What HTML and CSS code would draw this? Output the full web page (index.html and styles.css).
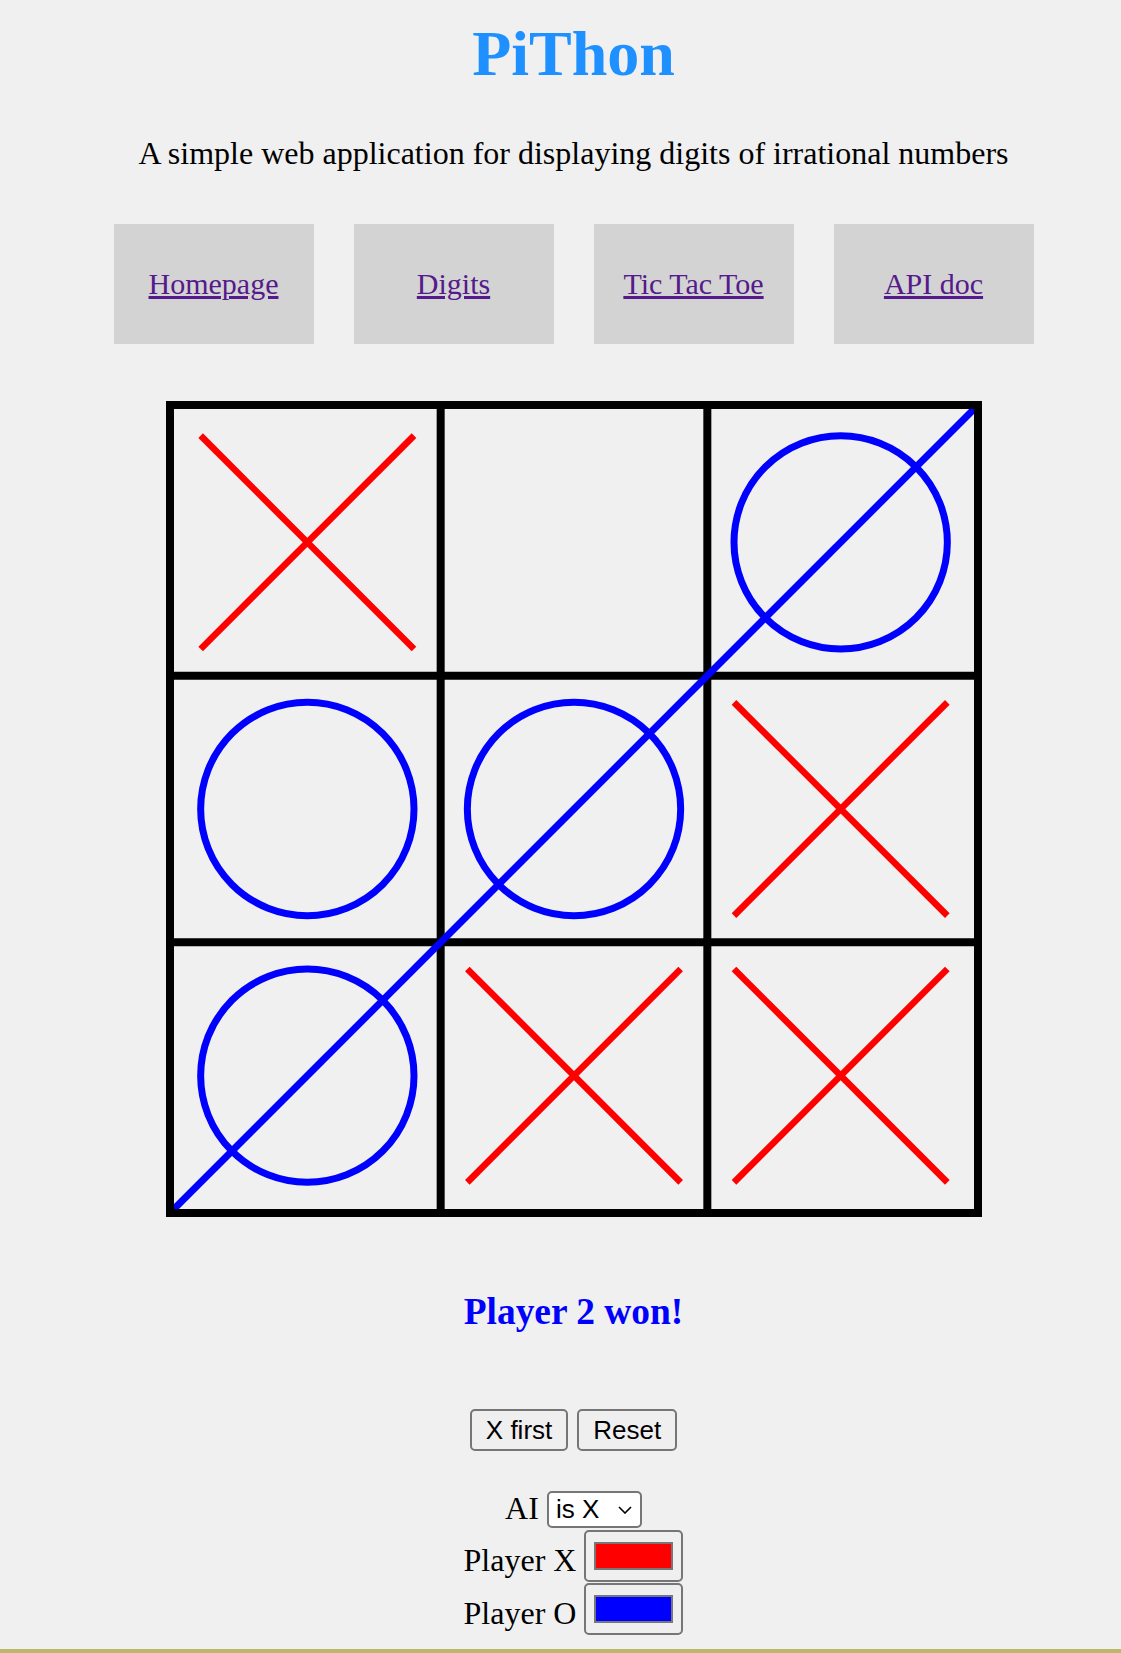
FILE: index.html
```
<!DOCTYPE html>
<html lang="en">
<head>
<meta charset="utf-8">
<title>PiThon - Tic Tac Toe</title>
<link rel="stylesheet" href="styles.css">
</head>
<body>
<div class="page">
  <header class="masthead">
    <h1 class="title">PiThon</h1>
    <p class="tagline">A simple web application for displaying digits of irrational numbers</p>
  </header>
  <nav class="nav">
    <div class="nav-item"><a class="nav-link" href="#">Homepage</a></div>
    <div class="nav-item"><a class="nav-link" href="#">Digits</a></div>
    <div class="nav-item"><a class="nav-link" href="#">Tic Tac Toe</a></div>
    <div class="nav-item"><a class="nav-link" href="#">API doc</a></div>
  </nav>
  <main class="game">
    <div class="board">
      <svg class="board-svg" width="800" height="800" viewBox="0 0 800 800" xmlns="http://www.w3.org/2000/svg">
        <g stroke="#000" stroke-width="8">
          <line x1="266.67" y1="0" x2="266.67" y2="800"/>
          <line x1="533.33" y1="0" x2="533.33" y2="800"/>
          <line x1="0" y1="266.67" x2="800" y2="266.67"/>
          <line x1="0" y1="533.33" x2="800" y2="533.33"/>
        </g>
        <g stroke="#ff0000" stroke-width="6.5" fill="none">
          <line x1="26.67" y1="26.67" x2="240" y2="240"/>
          <line x1="240" y1="26.67" x2="26.67" y2="240"/>
          <line x1="560" y1="293.33" x2="773.33" y2="506.67"/>
          <line x1="773.33" y1="293.33" x2="560" y2="506.67"/>
          <line x1="293.33" y1="560" x2="506.67" y2="773.33"/>
          <line x1="506.67" y1="560" x2="293.33" y2="773.33"/>
          <line x1="560" y1="560" x2="773.33" y2="773.33"/>
          <line x1="773.33" y1="560" x2="560" y2="773.33"/>
        </g>
        <g stroke="#0000ff" stroke-width="7" fill="none">
          <circle cx="666.67" cy="133.33" r="106.67"/>
          <circle cx="133.33" cy="400" r="106.67"/>
          <circle cx="400" cy="400" r="106.67"/>
          <circle cx="133.33" cy="666.67" r="106.67"/>
          <line x1="0" y1="800" x2="800" y2="0"/>
        </g>
      </svg>
    </div>
    <h3 class="status">Player 2 won!</h3>
    <div class="buttons">
      <button class="btn" type="button">X first</button>
      <button class="btn" type="button">Reset</button>
    </div>
    <div class="settings">
      <div class="setting setting-ai">
        <label class="setting-label" for="ai">AI</label>
        <span class="select-wrap">
          <select class="select" id="ai">
            <option>is X</option>
            <option>is O</option>
            <option>off</option>
          </select>
          <svg class="chevron" width="14" height="8" viewBox="0 0 14 8" xmlns="http://www.w3.org/2000/svg"><path d="M1 1 L7 7 L13 1" fill="none" stroke="#000" stroke-width="1.6"/></svg>
        </span>
      </div>
      <div class="setting">
        <label class="setting-label" for="colx">Player X</label>
        <input class="color" id="colx" type="color" value="#ff0000">
      </div>
      <div class="setting">
        <label class="setting-label" for="colo">Player O</label>
        <input class="color" id="colo" type="color" value="#0000ff">
      </div>
    </div>
  </main>
</div>
<footer class="footer"></footer>
</body>
</html>
```
FILE: styles.css
```
html, body {
  margin: 0;
  padding: 0;
}

body {
  background: #f0f0f0;
  color: #000;
  font-family: "Liberation Serif", "Times New Roman", serif;
}

.page {
  padding-left: 26px;
  display: flex;
  flex-direction: column;
  align-items: center;
}

.masthead {
  display: flex;
  flex-direction: column;
  align-items: center;
}

.title {
  margin: 17px 0 0;
  font-size: 64px;
  line-height: 74px;
  font-weight: bold;
  color: #1e90ff;
}

.tagline {
  margin: 43px 0 0;
  font-size: 32px;
  line-height: 38px;
}

.nav {
  margin-top: 52px;
  display: flex;
  gap: 40px;
}

.nav-item {
  width: 200px;
  height: 120px;
  background: #d3d3d3;
  display: flex;
  align-items: center;
  justify-content: center;
  font-size: 30px;
  line-height: 34px;
}

.nav-link {
  color: #551a8b;
  text-decoration: underline;
}

.game {
  display: flex;
  flex-direction: column;
  align-items: center;
}

.board {
  margin-top: 57px;
  width: 800px;
  height: 800px;
  border: 8px solid #000;
  background: #f0f0f0;
}

.board-svg {
  display: block;
}

.status {
  margin: 73px 0 0;
  font-size: 37.44px;
  line-height: 44px;
  font-weight: bold;
  color: #0000ff;
}

.buttons {
  margin-top: 75px;
  display: flex;
  gap: 9px;
}

.btn {
  font-family: "Liberation Sans", Arial, sans-serif;
  font-size: 26px;
  line-height: 30px;
  padding: 4px 14px;
  border: 2px solid #767676;
  border-radius: 5px;
  background: #efefef;
  color: #000;
  margin: 0;
}

.settings {
  margin-top: 38px;
  display: flex;
  flex-direction: column;
  align-items: center;
  gap: 1.5px;
}

.setting {
  display: flex;
  align-items: flex-end;
  gap: 8px;
}

.setting-label {
  font-size: 32px;
  line-height: 38px;
  margin-bottom: 3px;
}

.setting-ai .setting-label {
  margin-bottom: 1px;
}

.select-wrap {
  position: relative;
  display: block;
}

.select {
  display: block;
  appearance: none;
  -webkit-appearance: none;
  width: 95px;
  height: 37px;
  margin: 0;
  padding: 2px 7px;
  font-family: "Liberation Sans", Arial, sans-serif;
  font-size: 26px;
  line-height: 29px;
  border: 2px solid #767676;
  border-radius: 5px;
  background: #fff;
  color: #000;
}

.chevron {
  position: absolute;
  left: 71px;
  top: 15px;
  pointer-events: none;
}

.color {
  display: block;
  width: 99px;
  height: 52px;
  margin: 0;
  padding: 0;
  border: 2px solid #767676;
  border-radius: 5px;
  background: #efefef;
  box-sizing: border-box;
}

.color::-webkit-color-swatch-wrapper {
  padding: 10px 8px;
}

.color::-webkit-color-swatch {
  border: 2px solid #777;
  border-radius: 0;
}

.footer {
  margin-top: 14px;
  height: 60px;
  background: #bdb76b;
}
```
